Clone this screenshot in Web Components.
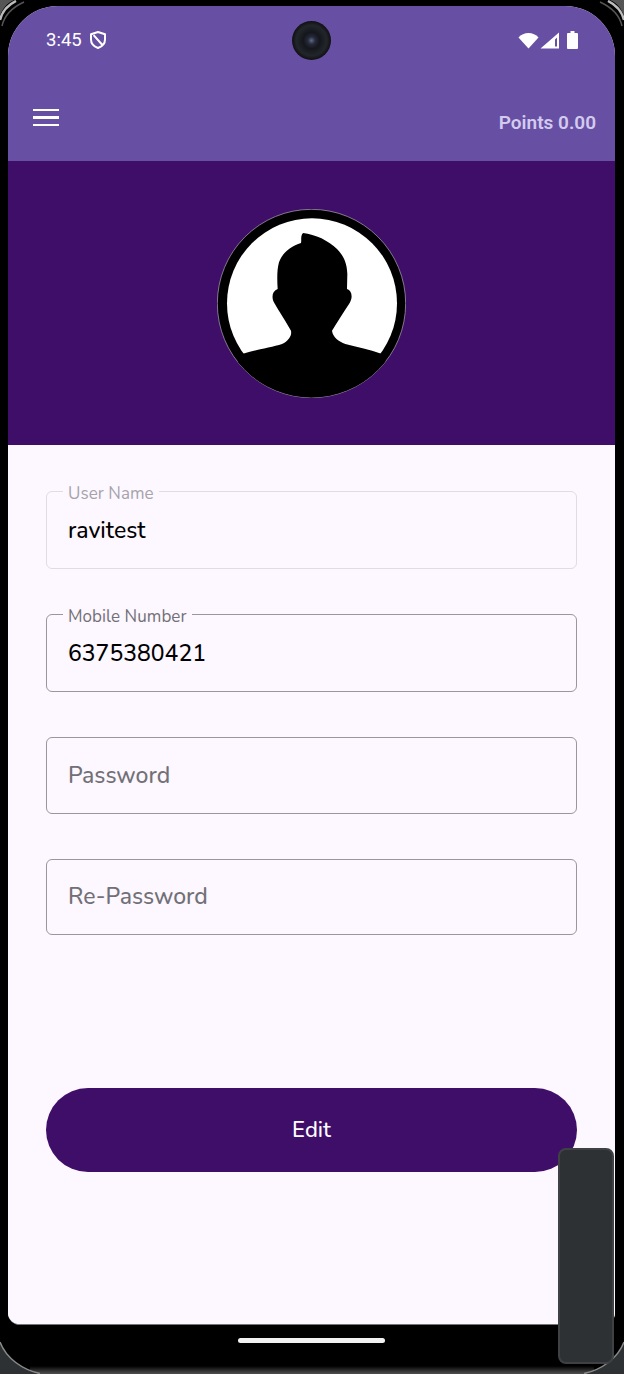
<!DOCTYPE html>
<html>
<head>
<meta charset="utf-8">
<title>Profile</title>
<style>
  html,body{margin:0;height:1374px;background:#000;overflow:hidden}
  body{position:relative;font-family:"Noto Sans",sans-serif}
</style>
</head>
<body>
<phone-frame>
  <status-bar time="3:45"></status-bar>
  <app-bar points="Points 0.00"></app-bar>
  <profile-hero></profile-hero>
  <profile-form>
    <text-field label="User Name" value="ravitest" disabled></text-field>
    <text-field label="Mobile Number" value="6375380421"></text-field>
    <text-field placeholder="Password"></text-field>
    <text-field placeholder="Re-Password"></text-field>
    <pill-button slot="action">Edit</pill-button>
  </profile-form>
</phone-frame>

<script>
class phoneFrame extends HTMLElement {
  constructor() {
    super();
    this.attachShadow({ mode: "open" });
    this.shadowRoot.innerHTML = `
    <style>
      :host{display:block;position:relative;width:624px;height:1374px;background:#000;overflow:hidden}
      .screen{margin:6px 9px 0 8px;height:1319px;display:flex;flex-direction:column;background:#fdf7ff;
        border-radius:50px 50px 12px 12px;overflow:hidden;border-bottom:1px solid #77737a;box-sizing:border-box}
      .nav{display:flex;justify-content:center;padding:13px 1px 0 0}
      .pill{width:147px;height:5px;border-radius:3px;background:#f2f2f2}
      .camera{position:absolute;left:292px;top:21px;width:39px;height:39px;border-radius:50%;
        background:radial-gradient(circle at 50% 50%,#5a6a80 0,#26283a 14%,#14161c 30%,#22262a 55%,#0a0a0c 75%)}
      .panel{position:absolute;left:558px;top:1148px;width:56px;height:216px;box-sizing:border-box;
        background:#2d3133;border:2px solid #3f4244;border-radius:8px}
      .edge{position:absolute;left:30px;right:30px;bottom:0;height:8px;background:linear-gradient(#000,#4a4a4a 90%)}
      .corner{position:absolute;width:40px;height:40px}
    </style>
    <div class="screen"><slot></slot></div>
    <div class="nav"><div class="pill"></div></div>
    <div class="camera"></div>
    <div class="edge"></div>
    <svg class="corner" style="left:0;top:0" viewBox="0 0 40 40"><path d="M0 0H14C7 3 2 9 0 16Z" fill="#555"/><path d="M0 20C2 12 8 5 16 1" fill="none" stroke="#bdbdbd" stroke-width="2.500"/><path d="M2 26C4 17 11 8 24 2" fill="none" stroke="#555" stroke-width="1.500"/></svg>
    <svg class="corner" style="right:0;top:0" viewBox="0 0 40 40"><path d="M40 0H26C33 3 38 9 40 16Z" fill="#555"/><path d="M40 20C38 12 32 5 24 1" fill="none" stroke="#bdbdbd" stroke-width="2.500"/><path d="M38 26C36 17 29 8 16 2" fill="none" stroke="#555" stroke-width="1.500"/></svg>
    <svg class="corner" style="left:0;bottom:0" viewBox="0 0 40 40"><path d="M0 8C6 24 22 36 42 40H0Z" fill="#2d3133"/><path d="M0 8C6 24 22 36 42 40" fill="none" stroke="#8a8a8a" stroke-width="1.500"/></svg>
    <svg class="corner" style="right:0;bottom:0" viewBox="0 0 40 40"><path d="M40 8C34 24 18 36 -2 40H40Z" fill="#2d3133"/><path d="M40 8C34 24 18 36 -2 40" fill="none" stroke="#8a8a8a" stroke-width="1.500"/></svg>
    <div class="panel"></div>
    `;
  }
}

class statusBar extends HTMLElement {
  constructor() {
    super();
    this.attachShadow({ mode: "open" });
  }
  connectedCallback() {
    this.shadowRoot.innerHTML = `
    <style>
      :host{display:flex;align-items:center;height:68px;padding:0 37px 0 38px;background:#6750a4;color:#fff;
        font:400 18.500px Roboto,sans-serif}
      .left{display:flex;align-items:center;gap:8px}
      .right{margin-left:auto;display:flex;align-items:center}
      svg{display:block}
    </style>
    <div class="left">
      <span>${this.getAttribute("time")}</span>
      <svg width="16" height="18" viewBox="0 0 16 18"><path d="M8 1 1 3.200v5.300c0 3.900 2.800 7 7 8.500 4.200-1.500 7-4.600 7-8.500V3.200ZM3.600 4.200l8.800 9.800" fill="none" stroke="#fff" stroke-width="2" stroke-linejoin="round"/></svg>
    </div>
    <div class="right">
      <svg width="21" height="17" viewBox="0 0 21 17"><path d="M10.500 16.500 0.500 5.500C3 2.500 6.500 1 10.500 1s7.500 1.500 10 4.500Z" fill="#fff"/></svg>
      <svg width="19" height="17" viewBox="0 0 19 17" style="margin-left:1px"><path d="M19 0.500V16.500H0.500ZM15 7.500V14.500H17V5.500Z" fill="#fff" fill-rule="evenodd"/></svg>
      <svg width="11" height="18" viewBox="0 0 11 18" style="margin-left:8px"><path d="M3.500 0h4v2H10a1 1 0 0 1 1 1v14a1 1 0 0 1-1 1H1a1 1 0 0 1-1-1V3a1 1 0 0 1 1-1h2.500Z" fill="#fff"/></svg>
    </div>
    `;
  }
}

class appBar extends HTMLElement {
  constructor() {
    super();
    this.attachShadow({ mode: "open" });
  }
  connectedCallback() {
    this.shadowRoot.innerHTML = `
    <style>
      :host{display:flex;align-items:center;justify-content:space-between;height:87px;padding:0 19px 0 25px;
        background:#6750a4;color:#d3cbee;font:600 19px Roboto,sans-serif}
      .menu{display:flex;flex-direction:column;gap:5px;width:26px}
      .menu i{display:block;height:2.600px;background:#fff}
      .points{margin-top:10px}
    </style>
    <div class="menu"><i></i><i></i><i></i></div>
    <span class="points">${this.getAttribute("points")}</span>
    `;
  }
}

class profileHero extends HTMLElement {
  constructor() {
    super();
    this.attachShadow({ mode: "open" });
    this.shadowRoot.innerHTML = `
    <style>
      :host{display:flex;justify-content:center;align-items:center;height:284px;background:#3f0e69}
      svg{display:block}
    </style>
    <svg width="189" height="189" viewBox="50 40 567 567">
      <defs>
        <clipPath id="c"><circle cx="333.500" cy="323.500" r="282"/></clipPath>
        <filter id="soft"><feGaussianBlur stdDeviation="1.500"/></filter>
      </defs>
      <circle cx="333.500" cy="323.500" r="282.500" fill="#000" stroke="#b5adbb" stroke-width="2"/>
      <g filter="url(#soft)">
        <circle cx="335" cy="323" r="255" fill="#fff"/>
        <path clip-path="url(#c)" d="M125 475C165 462 215 455 245 445C265 435 275 420 272 405C255 375 235 345 222 322C212 305 216 285 232 280C230 250 230 220 236 200C246 170 275 150 302 142C304 132 300 120 308 112C345 116 385 135 410 160C432 182 440 205 441 235L440 280C455 285 458 305 448 322C430 350 410 380 395 405C398 425 415 437 435 445C470 455 510 462 545 475L620 620H40Z" fill="#000"/>
      </g>
    </svg>
    `;
  }
}

class profileForm extends HTMLElement {
  constructor() {
    super();
    this.attachShadow({ mode: "open" });
    this.shadowRoot.innerHTML = `
    <style>
      :host{display:flex;flex-direction:column;flex:1;padding:46px 38px 0;background:#fdf7ff}
      .fields{display:flex;flex-direction:column;gap:45px}
      .action{margin-top:153px}
    </style>
    <div class="fields"><slot></slot></div>
    <div class="action"><slot name="action"></slot></div>
    `;
  }
}

class textField extends HTMLElement {
  constructor() {
    super();
    this.attachShadow({ mode: "open" });
  }
  connectedCallback() {
    const label = this.getAttribute("label");
    const value = this.getAttribute("value");
    const off = this.hasAttribute("disabled");
    this.shadowRoot.innerHTML = `
    <style>
      :host{display:block;position:relative;height:${label ? 78 : 76.5}px;box-sizing:border-box;
        border:1.500px solid ${off ? "#e1dce4" : "#9a969e"};border-radius:6px;
        font-family:"Nunito","Noto Sans",sans-serif}
      .label{position:absolute;left:16px;top:-8.500px;padding:0 5px;background:#fdf7ff;font-size:17px;line-height:20px;
        letter-spacing:.05px;color:${off ? "#a6a3aa" : "#717076"}}
      .text{position:absolute;left:21px;top:0;bottom:0;display:flex;align-items:center;font-size:23px}
      .value{color:#000;font-weight:500}
      .hint{color:#717076;font-weight:500}
    </style>
    ${label ? `<span class="label">${label}</span>` : ""}
    <span class="text ${value ? "value" : "hint"}">${value || this.getAttribute("placeholder")}</span>
    `;
  }
}

class pillButton extends HTMLElement {
  constructor() {
    super();
    this.attachShadow({ mode: "open" });
    this.shadowRoot.innerHTML = `
    <style>
      :host{display:flex;align-items:center;justify-content:center;height:84px;border-radius:42px;
        background:#3f0e69;color:#fff;font:500 22px "Nunito","Noto Sans",sans-serif}
    </style>
    <slot></slot>
    `;
  }
}

customElements.define("phone-frame", phoneFrame);
customElements.define("status-bar", statusBar);
customElements.define("app-bar", appBar);
customElements.define("profile-hero", profileHero);
customElements.define("profile-form", profileForm);
customElements.define("text-field", textField);
customElements.define("pill-button", pillButton);
</script>
</body>
</html>
